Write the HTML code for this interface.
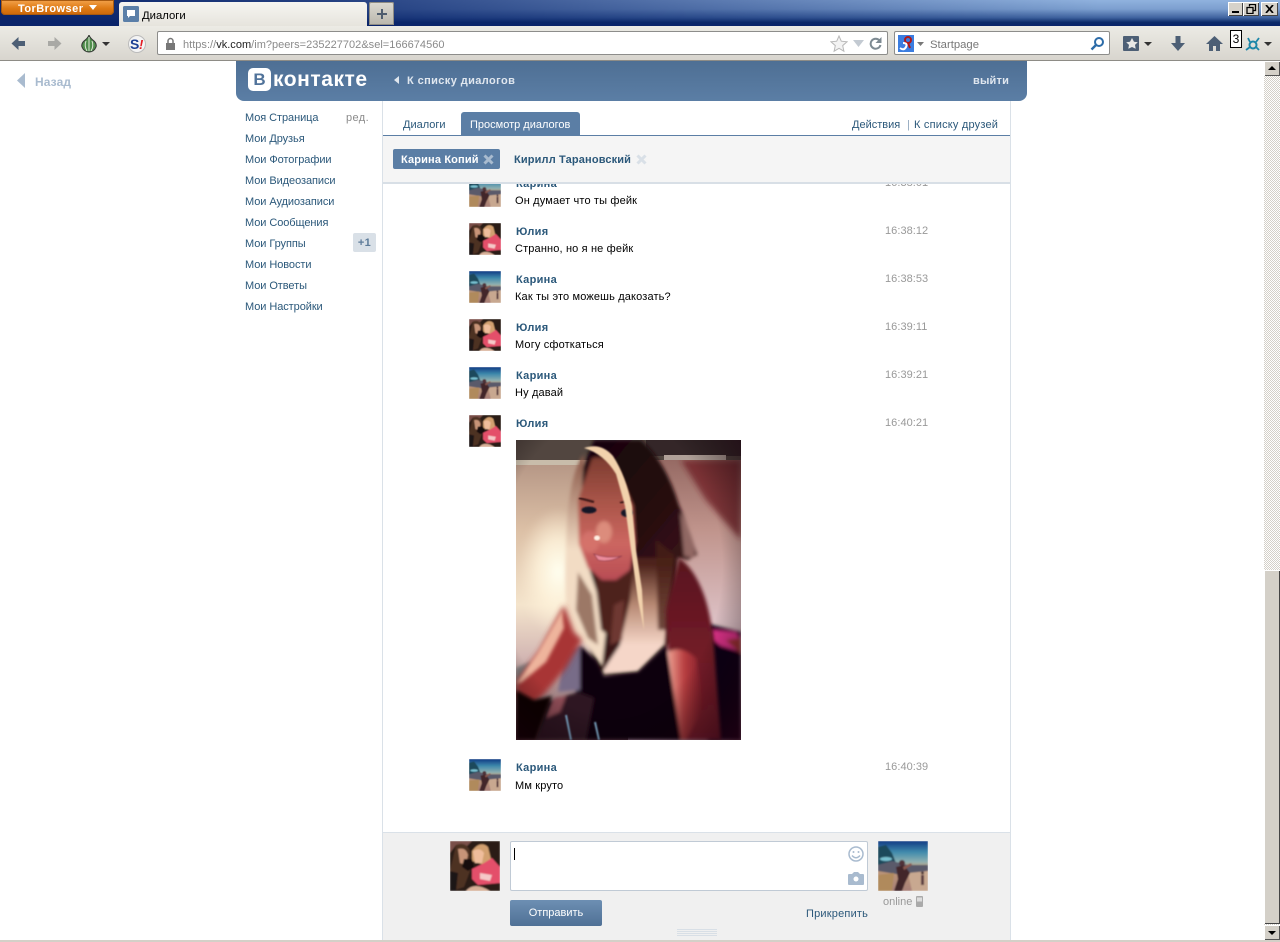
<!DOCTYPE html>
<html lang="ru"><head><meta charset="utf-8"><title>Диалоги</title>
<style>
html,body{margin:0;padding:0;width:1280px;height:942px;overflow:hidden;background:#fff}
body{position:relative;font:11px "Liberation Sans","DejaVu Sans",sans-serif;color:#000}
.a{position:absolute;white-space:nowrap}
.m{left:245px;color:#2b587a;line-height:14px;letter-spacing:-.07px}
.n{left:516px;font-weight:bold;color:#2b587a;line-height:14px;letter-spacing:.3px}
.t{left:515px;line-height:14px;letter-spacing:.15px}
.h{left:885px;color:#999;line-height:14px;letter-spacing:.05px}
svg.a{display:block}
</style></head><body>
<svg width="0" height="0" style="position:absolute">
<defs>
<filter id="b05"><feGaussianBlur stdDeviation=".7"/></filter>
<linearGradient id="ks" x1="0" y1="0" x2="0" y2="1"><stop offset="0" stop-color="#103a84"/><stop offset=".22" stop-color="#3f8aac"/><stop offset=".42" stop-color="#8fb0b0"/><stop offset=".52" stop-color="#c09a78"/><stop offset="1" stop-color="#a87f78"/></linearGradient>
<symbol id="kar" viewBox="0 0 50 50"><g filter="url(#b05)"><rect width="50" height="50" fill="url(#ks)"/>
<path d="M0 6L8 4L14 12L18 22L0 26Z" fill="#1c4a5c"/><path d="M0 24L14 20L30 24L50 24V30L24 34L0 30Z" fill="#5a5a6a"/><ellipse cx="8" cy="18" rx="6" ry="2" fill="#78c0d0"/>
<path d="M30 32L50 30V50H34Z" fill="#c8a890"/><path d="M0 34L16 32L14 50H0Z" fill="#b08a5c"/>
<circle cx="24" cy="22" r="3" fill="#503038"/><path d="M18 26L26 24L32 32L27 42L24 50H16L20 38Z" fill="#43262c"/><path d="M25 26l8 -4l1 2l-8 5z" fill="#8a5a50"/>
<path d="M43 34h3v10h-3z" fill="#5a3c40"/><circle cx="44.500" cy="32" r="1.500" fill="#4a3034"/></g></symbol>
<symbol id="jul" viewBox="0 0 50 50"><g filter="url(#b05)"><rect width="50" height="50" fill="#2a1a14"/><path d="M0 0H22L16 6L6 4L0 12Z" fill="#7a5048"/>
<path d="M6 4Q16 0 20 10L20 30L14 46L2 50L0 30Z" fill="#4e3024"/><path d="M8 8Q16 6 18 14L16 24L10 22Z" fill="#c89478"/>
<path d="M22 10Q30 -1 38 6L42 22L34 24L22 20Z" fill="#d2a070"/><path d="M23 10Q30 6 34 12L32 22L25 22Z" fill="#efbd9c"/>
<path d="M14 18h8l2 8l-6 4l-6 -4z" fill="#141010"/>
<path d="M22 28L34 22L42 17L50 26V42L28 44L22 38Z" fill="#e4506a"/><path d="M30 32l12 2l-2 6l-10 -2z" fill="#f5c8c8"/>
<path d="M16 50Q24 40 40 50Z" fill="#d8b098"/><path d="M0 30L8 32L6 50H0Z" fill="#1e1614"/></g></symbol>
<linearGradient id="wl" x1="0" y1="0" x2="0" y2="1"><stop offset="0" stop-color="#a8887a"/><stop offset=".3" stop-color="#dcc0a6"/><stop offset=".55" stop-color="#f4e4cc"/><stop offset=".72" stop-color="#d4b8b4"/><stop offset="1" stop-color="#6a4a50"/></linearGradient>
<linearGradient id="wr" x1="0" y1="0" x2="0" y2="1"><stop offset="0" stop-color="#8a5e58"/><stop offset=".3" stop-color="#c0948c"/><stop offset=".6" stop-color="#dcc0c4"/><stop offset="1" stop-color="#d8b8c8"/></linearGradient>
<linearGradient id="fc" x1="0" y1="0" x2="0" y2="1"><stop offset="0" stop-color="#7c3c30"/><stop offset=".35" stop-color="#a85448"/><stop offset=".7" stop-color="#cc6660"/><stop offset="1" stop-color="#b84c54"/></linearGradient>
<linearGradient id="dh" x1="0" y1="0" x2=".6" y2="1"><stop offset="0" stop-color="#140408"/><stop offset=".5" stop-color="#260a10"/><stop offset="1" stop-color="#4a1e1a"/></linearGradient>
<linearGradient id="lh" gradientUnits="userSpaceOnUse" x1="0" y1="125" x2="0" y2="205"><stop offset="0" stop-color="#4e241c"/><stop offset=".5" stop-color="#b88a74"/><stop offset="1" stop-color="#f5d6c8"/></linearGradient>
<linearGradient id="lp" gradientUnits="userSpaceOnUse" x1="0" y1="20" x2="0" y2="110"><stop offset="0" stop-color="#8c5a4a"/><stop offset="1" stop-color="#f2dcc4"/></linearGradient>
<linearGradient id="arm" x1="0" y1="0" x2="1" y2="0"><stop offset="0" stop-color="#eea090"/><stop offset=".45" stop-color="#b83e40"/><stop offset="1" stop-color="#7c1a28"/></linearGradient>
<linearGradient id="sh" x1="0" y1="0" x2="0" y2="1"><stop offset="0" stop-color="#58141e"/><stop offset="1" stop-color="#8a2230"/></linearGradient>
<radialGradient id="fl"><stop offset="0" stop-color="#fffff0"/><stop offset=".5" stop-color="#fff4dc" stop-opacity=".8"/><stop offset="1" stop-color="#fff0d8" stop-opacity="0"/></radialGradient>
<radialGradient id="vig" cx=".42" cy=".42" r=".8"><stop offset=".62" stop-color="#000" stop-opacity="0"/><stop offset="1" stop-color="#200010" stop-opacity=".75"/></radialGradient>
<filter id="b1"><feGaussianBlur stdDeviation="1.800"/></filter>
<filter id="b2"><feGaussianBlur stdDeviation="3"/></filter>
</defs></svg>

<!-- title bar -->
<div class="a" style="left:0;top:0;width:1280px;height:26px;background:linear-gradient(180deg,#90b2de 0,#7c9fcf 35%,#3f639f 68%,#0b2a68 86%,#0a246a 100%)"></div>
<div class="a" style="left:0;top:0;width:1100px;height:26px;background:linear-gradient(90deg,#0a246a 0,rgba(10,36,106,.8) 30%,rgba(10,36,106,.45) 60%,rgba(10,36,106,0))"></div>
<div class="a" style="left:1px;top:0;width:113px;height:15px;background:linear-gradient(180deg,#f3a34c,#de7a14 55%,#c9660a);border-radius:0 0 4px 4px;box-shadow:0 0 0 1px #a85a10 inset"></div>
<div class="a" style="left:18px;top:2px;color:#fff;font-weight:bold;line-height:14px;letter-spacing:.45px">TorBrowser</div>
<div class="a" style="left:89px;top:5px;width:0;height:0;border:4px solid transparent;border-top:5px solid #fff;border-bottom:0"></div>
<div class="a" style="left:119px;top:2px;width:248px;height:24px;background:linear-gradient(180deg,#f6f5f1,#e6e4dd);border-radius:3px 3px 0 0"></div>
<svg class="a" style="left:123px;top:6px" width="16" height="16"><rect width="16" height="16" rx="1.500" fill="#5b7fa8"/><path d="M4 4h8v6H7l-2 2v-2H4z" fill="#fff"/></svg>
<div class="a" style="left:142px;top:9px;line-height:14px;font-size:11.300px">Диалоги</div>
<div class="a" style="left:369px;top:2px;width:25px;height:23px;background:linear-gradient(180deg,#dcdad2,#b9b6ac);border-radius:2px 2px 0 0;box-shadow:0 0 0 1px #8e8c84 inset"></div>
<svg class="a" style="left:376px;top:8px" width="12" height="12"><path d="M6 1v10M1 6h10" stroke="#4f5d6e" stroke-width="2"/></svg>
<!-- window buttons -->
<div class="a" style="left:1228px;top:2px;width:15px;height:14px;background:#d6d2ca;box-shadow:inset 1px 1px #fff,inset -1px -1px #444"></div>
<div class="a" style="left:1243px;top:2px;width:16px;height:14px;background:#d6d2ca;box-shadow:inset 1px 1px #fff,inset -1px -1px #444"></div>
<div class="a" style="left:1261px;top:2px;width:17px;height:14px;background:#d6d2ca;box-shadow:inset 1px 1px #fff,inset -1px -1px #444"></div>
<div class="a" style="left:1232px;top:11px;width:7px;height:2px;background:#000"></div>
<svg class="a" style="left:1246px;top:4px" width="11" height="10"><path d="M3.500 2.500V.5h6v6H7.500M1 3.500h6v6H1z" fill="none" stroke="#000" stroke-width="1.300"/></svg>
<svg class="a" style="left:1265px;top:5px" width="9" height="8"><path d="M1 0l7 8M8 0L1 8" stroke="#000" stroke-width="1.700"/></svg>

<!-- toolbar -->
<div class="a" style="left:0;top:26px;width:1280px;height:34px;background:linear-gradient(180deg,#ecebe5,#d8d5ce);border-bottom:1px solid #8e8c86"></div>
<svg class="a" style="left:11px;top:36px" width="15" height="15"><path d="M7.500 1L.5 7.500L7.500 14V10H14V5H7.500Z" fill="#4d5f75"/></svg>
<svg class="a" style="left:47px;top:36px" width="15" height="15"><path d="M7.500 1L14.500 7.500L7.500 14V10H1V5H7.500Z" fill="#a9a9a5"/></svg>
<svg class="a" style="left:81px;top:35px" width="30" height="19"><path d="M8 0Q9 3 13 6Q16 9 15 12Q13 17 8 17Q3 17 1 12Q0 9 3 6Q7 3 8 0Z" fill="#4f8d4c" stroke="#333"/><path d="M8 2v14M5 6Q3 11 6 16M11 6Q13 11 10 16" stroke="#dfe8d8" fill="none"/><path d="M21 7h8l-4 4z" fill="#333"/></svg>
<svg class="a" style="left:128px;top:35px" width="18" height="18"><circle cx="9" cy="9" r="8.500" fill="#f4f4f4" stroke="#bbb"/><text x="2" y="14" font-family="Liberation Sans" font-weight="bold" font-size="14" fill="#1c3f94">S</text><text x="11" y="14" font-family="Liberation Sans" font-weight="bold" font-style="italic" font-size="13" fill="#e31b23">!</text></svg>
<div class="a" style="left:157px;top:31px;width:729px;height:22px;background:#fff;border:1px solid #8d8d8b;border-radius:2px"></div>
<svg class="a" style="left:165px;top:37px" width="11" height="13"><path d="M3 6V4a2.500 2.500 0 0 1 5 0v2" fill="none" stroke="#777" stroke-width="1.500"/><rect x="1" y="6" width="9" height="7" fill="#777"/></svg>
<div class="a" style="left:183px;top:38px;line-height:14px;color:#8a8a8a;font-size:11px;letter-spacing:.02px">https://<span style="color:#222">vk.com</span>/im?peers=235227702&amp;sel=166674560</div>
<svg class="a" style="left:830px;top:35px" width="18" height="18"><path d="M9 1l2.300 5.200 5.700.6-4.300 3.800 1.200 5.600L9 13.300 4.100 16.200l1.200-5.600L1 6.800l5.700-.6z" fill="#f3f3f3" stroke="#b8b8b8"/></svg>
<svg class="a" style="left:853px;top:39px" width="11" height="9"><path d="M0 1h11l-5.500 7z" fill="#c3cad2"/></svg>
<svg class="a" style="left:869px;top:36px" width="13" height="14"><path d="M10.500 4.500A5 5 0 1 0 11.500 9" fill="none" stroke="#7d8a92" stroke-width="2"/><path d="M12.500 1v6h-6z" fill="#7d8a92"/></svg>
<div class="a" style="left:894px;top:31px;width:214px;height:22px;background:#fff;border:1px solid #8d8d8b;border-radius:2px"></div>
<svg class="a" style="left:898px;top:35px" width="28" height="17"><rect width="16" height="17" fill="#3b7de0"/><circle cx="10" cy="5" r="3" fill="none" stroke="#b01818" stroke-width="2"/><path d="M10 8l2 5" stroke="#b01818" stroke-width="2"/><path d="M2 13q4 3 6-1t-3-4" fill="none" stroke="#fff" stroke-width="2"/><path d="M19 7h7l-3.500 4z" fill="#777"/></svg>
<div class="a" style="left:930px;top:38px;line-height:14px;color:#777;font-size:11.300px">Startpage</div>
<svg class="a" style="left:1090px;top:36px" width="15" height="15"><circle cx="9" cy="6" r="4" fill="none" stroke="#2d6ca8" stroke-width="2"/><path d="M6 9L1.500 13.500" stroke="#2d6ca8" stroke-width="2.400"/></svg>
<svg class="a" style="left:1123px;top:36px" width="30" height="15"><rect width="16" height="15" rx="1" fill="#4d5f75"/><path d="M9 2l2 3.800 3.800.5-2.800 2.600.7 3.800L9 11l-3.700 1.700.7-3.800-2.800-2.600 3.800-.5z" fill="#e8e8e6"/><path d="M21 6h8l-4 4z" fill="#333"/></svg>
<svg class="a" style="left:1171px;top:36px" width="14" height="15"><path d="M4.500 0h5v7H14L7 15 0 7h4.500z" fill="#4d5f75"/></svg>
<svg class="a" style="left:1206px;top:36px" width="17" height="15"><path d="M8.500 0L17 8h-3v7H10v-5H7v5H3V8H0z" fill="#4d5f75"/></svg>
<div class="a" style="left:1230px;top:30px;width:10px;height:16px;background:#fff;border:1px solid #000;text-align:center;line-height:16px;font-size:12px">3</div>
<svg class="a" style="left:1244px;top:36px" width="30" height="16"><circle cx="9" cy="9" r="3.500" fill="none" stroke="#1c86a8" stroke-width="2"/><path d="M2 14l4-3M12 6l3-4M12 11l3 3M6 6L4 2" stroke="#1c86a8" stroke-width="1.800"/><path d="M20 6h8l-4 4z" fill="#333"/></svg>

<!-- scrollbar -->
<div class="a" style="left:1264px;top:61px;width:16px;height:880px;background:repeating-conic-gradient(#d4d0c8 0 25%,#fff 0 50%) 0 0/2px 2px"></div>
<div class="a" style="left:1264px;top:61px;width:16px;height:15px;background:#d4d0c8;box-shadow:inset 1px 1px #fff,inset -1px -1px #555"></div>
<div class="a" style="left:1268px;top:66px;width:0;height:0;border:4px solid transparent;border-bottom:4px solid #000;border-top:0"></div>
<div class="a" style="left:1264px;top:570px;width:16px;height:354px;background:#d4d0c8;box-shadow:inset 1px 1px #fff,inset -1px -1px #444"></div>
<div class="a" style="left:1264px;top:925px;width:16px;height:15px;background:#d4d0c8;box-shadow:inset 1px 1px #fff,inset -1px -1px #555"></div>
<div class="a" style="left:1268px;top:931px;width:0;height:0;border:4px solid transparent;border-top:4px solid #000;border-bottom:0"></div>
<div class="a" style="left:0;top:940px;width:1280px;height:2px;background:#d4d0c8"></div>

<!-- back -->
<svg class="a" style="left:17px;top:73px" width="9" height="15"><path d="M8 0V15L0 7.500Z" fill="#a9bbcf"/></svg>
<div class="a" style="left:35px;top:75px;color:#a9bbcf;font-weight:bold;font-size:12px;line-height:14px;letter-spacing:.1px">Назад</div>

<!-- header -->
<div class="a" style="left:236px;top:61px;width:791px;height:40px;background:linear-gradient(180deg,#4e6f94,#5b7ea5);border-radius:0 0 8px 8px"></div>
<div class="a" style="left:248px;top:68px;width:23px;height:23px;background:#fff;border-radius:5px;color:#51739a;font:bold 17px/23px 'Liberation Sans',sans-serif;text-align:center">В</div>
<div class="a" style="left:273px;top:68px;color:#fff;font:bold 21px/23px 'Liberation Sans',sans-serif;letter-spacing:.55px">контакте</div>
<div class="a" style="left:394px;top:76px;width:0;height:0;border:4px solid transparent;border-right:5px solid #dfe6ee;border-left:0"></div>
<div class="a" style="left:407px;top:74px;color:#e0e7ef;font-weight:bold;line-height:14px;letter-spacing:.4px">К списку диалогов</div>
<div class="a" style="left:973px;top:74px;color:#e0e7ef;font-weight:bold;line-height:14px;letter-spacing:.2px">выйти</div>

<!-- left menu -->
<div class="a m" style="top:111px">Моя Страница</div>
<div class="a" style="left:346px;top:111px;color:#8a8a8a;line-height:14px;letter-spacing:.4px">ред.</div>
<div class="a m" style="top:132px">Мои Друзья</div>
<div class="a m" style="top:153px">Мои Фотографии</div>
<div class="a m" style="top:174px">Мои Видеозаписи</div>
<div class="a m" style="top:195px">Мои Аудиозаписи</div>
<div class="a m" style="top:216px">Мои Сообщения</div>
<div class="a m" style="top:237px">Мои Группы</div>
<div class="a" style="left:353px;top:233px;width:23px;height:19px;background:#d9e0e7;border-radius:2px;text-align:center;font-weight:bold;color:#5d7b99;line-height:21px;letter-spacing:.4px">+1</div>
<div class="a m" style="top:258px">Мои Новости</div>
<div class="a m" style="top:279px">Мои Ответы</div>
<div class="a m" style="top:300px">Мои Настройки</div>

<!-- main column -->
<div class="a" style="left:382px;top:101px;width:629px;height:839px;background:#fff;border-left:1px solid #dae1e8;border-right:1px solid #dae1e8;box-sizing:border-box"></div>
<div class="a" style="left:403px;top:118px;color:#2b587a;line-height:14px">Диалоги</div>
<div class="a" style="left:461px;top:112px;width:119px;height:24px;background:#5b7ea5;border-radius:3px 3px 0 0"></div>
<div class="a" style="left:470px;top:118px;color:#fff;line-height:14px">Просмотр диалогов</div>
<div class="a" style="left:852px;top:118px;color:#2b587a;line-height:14px">Действия</div>
<div class="a" style="left:907px;top:118px;color:#8fa6bd;line-height:14px">|</div>
<div class="a" style="left:914px;top:118px;color:#2b587a;line-height:14px;letter-spacing:.2px">К списку друзей</div>
<div class="a" style="left:383px;top:135px;width:627px;height:1px;background:#5b7ea5"></div>
<div class="a" style="left:383px;top:136px;width:627px;height:46px;background:#f5f5f5;border-bottom:2px solid #d8dfe6"></div>
<div class="a" style="left:393px;top:149px;width:107px;height:20px;background:#5b7ea5;border-radius:2px"></div>
<div class="a" style="left:401px;top:153px;color:#fff;font-weight:bold;line-height:14px;letter-spacing:.15px">Карина Копий</div>
<svg class="a" style="left:483px;top:154px" width="11" height="11"><path d="M1.500 1.500l8 8M9.500 1.500l-8 8" stroke="#a9bbcf" stroke-width="3"/></svg>
<div class="a" style="left:514px;top:153px;color:#2b587a;font-weight:bold;line-height:14px;letter-spacing:.15px">Кирилл Тарановский</div>
<svg class="a" style="left:636px;top:154px" width="11" height="11"><path d="M1.500 1.500l8 8M9.500 1.500l-8 8" stroke="#d9e0e7" stroke-width="3"/></svg>

<!-- messages: clipped first row -->
<div class="a" style="left:383px;top:184px;width:627px;height:30px;overflow:hidden">
<svg class="a" style="left:86px;top:-9px" width="32" height="32"><use href="#kar"/></svg>
<div class="a n" style="left:133px;top:-7px">Карина</div>
<div class="a h" style="left:502px;top:-8px">16:38:01</div>
<div class="a t" style="left:132px;top:10px">Он думает что ты фейк</div>
</div>

<svg class="a" style="left:469px;top:223px" width="32" height="32"><use href="#jul"/></svg>
<div class="a n" style="top:225px">Юлия</div><div class="a h" style="top:224px">16:38:12</div><div class="a t" style="top:242px">Странно, но я не фейк</div>

<svg class="a" style="left:469px;top:271px" width="32" height="32"><use href="#kar"/></svg>
<div class="a n" style="top:273px">Карина</div><div class="a h" style="top:272px">16:38:53</div><div class="a t" style="top:290px">Как ты это можешь дакозать?</div>

<svg class="a" style="left:469px;top:319px" width="32" height="32"><use href="#jul"/></svg>
<div class="a n" style="top:321px">Юлия</div><div class="a h" style="top:320px">16:39:11</div><div class="a t" style="top:338px">Могу сфоткаться</div>

<svg class="a" style="left:469px;top:367px" width="32" height="32"><use href="#kar"/></svg>
<div class="a n" style="top:369px">Карина</div><div class="a h" style="top:368px">16:39:21</div><div class="a t" style="top:386px">Ну давай</div>

<svg class="a" style="left:469px;top:415px" width="32" height="32"><use href="#jul"/></svg>
<div class="a n" style="top:417px">Юлия</div><div class="a h" style="top:416px">16:40:21</div>

<!-- photo -->
<svg class="a" style="left:516px;top:440px" width="225" height="300" viewBox="0 0 225 300">
<defs><clipPath id="pc"><rect width="225" height="300"/></clipPath></defs>
<g clip-path="url(#pc)">
<rect width="112" height="300" fill="url(#wl)"/>
<rect x="112" width="113" height="300" fill="url(#wr)"/>
<g filter="url(#b2)">
<path d="M165 20H225V100L190 60Z" fill="#701e28" opacity=".8"/>
<ellipse cx="42" cy="132" rx="40" ry="64" fill="url(#fl)"/>
</g>
<rect width="225" height="20" fill="#524640"/><rect x="130" width="95" height="16" fill="#342628"/>
<rect y="20" width="64" height="5" fill="#c8bcaa"/><rect x="148" y="15" width="62" height="5" fill="#b0a098"/>
<g filter="url(#b1)">
<!-- bed right -->
<path d="M192 184L225 192V300H192Z" fill="#0e0616"/>
<path d="M196 190L220 192L225 200V212L205 206L197 200Z" fill="#dc3088"/>
<path d="M210 200L225 198V214Z" fill="#a03034"/>
<!-- back hair -->
<path d="M78 0H125Q150 22 163 65Q176 95 181 115L172 120L162 118L158 200L120 240L80 235L60 150L62 40Z" fill="url(#dh)"/>
<path d="M164 72Q182 100 178 118L168 116Z" fill="#b88c84" opacity=".7"/>
<!-- left pale hair -->
<path d="M68 14Q56 30 52 70Q48 130 50 165L54 190L72 206L86 226L90 190L80 150L64 100L66 50Z" fill="url(#lp)"/>
<path d="M62 132L76 155L82 205L72 198L60 170Z" fill="#9c7866"/>
<!-- neck -->
<path d="M78 130L118 132L118 190L100 200L85 190Z" fill="#4e201e"/>
<!-- lower hair -->
<path d="M118 118L158 118L150 190L148 205L122 232L85 234L104 205L114 160Z" fill="url(#lh)"/>
<path d="M140 100L158 115L150 190L142 190Z" fill="#4a2018" opacity=".75"/>
<path d="M98 165L108 160L106 200L94 205Z" fill="#6e3830"/>
<!-- face -->
<path d="M76 18Q96 14 104 36L117 66L119 102L114 130L100 140L86 140L72 128L63 104L62 60Z" fill="url(#fc)"/>
<ellipse cx="74" cy="102" rx="9" ry="11" fill="#d87870" opacity=".7"/>
<ellipse cx="88" cy="92" rx="8" ry="11" fill="#dc8c7c"/>
</g>
<ellipse cx="81" cy="98" rx="3" ry="2.500" fill="#fff0e4" filter="url(#b05)"/>
<!-- features -->
<path d="M63 58L78 62M104 63L115 60" stroke="#3e1618" stroke-width="2.200" fill="none" filter="url(#b05)"/>
<ellipse cx="73" cy="70" rx="7.500" ry="3.500" fill="#141428" filter="url(#b05)"/>
<ellipse cx="111" cy="73" rx="6" ry="4" fill="#141428" filter="url(#b05)"/>
<path d="M78 114Q92 119 106 116Q92 123 82 120Z" fill="#ec8c9c" stroke="#984050" stroke-width=".8" filter="url(#b05)"/>
<g filter="url(#b05)">
<!-- blond stripe -->
<path d="M68 8Q85 2 97 16Q110 36 116 66L120 110L126 150L128 190L122 160L115 110L109 66L100 34Q88 14 68 8Z" fill="#f2d2ac"/>
</g>
<g filter="url(#b1)">
<!-- right arm -->
<path d="M163 118Q178 128 188 155Q195 175 198 205L205 300H165L152 210L150 170Z" fill="url(#sh)"/>
<path d="M152 212Q165 205 180 218L188 268L170 300H164Z" fill="url(#arm)"/>
<!-- black top -->
<path d="M64 205L80 220L88 236L122 232L150 205L165 300H55L60 250Z" fill="#0a0208"/>
<!-- fabric -->
<path d="M48 212L64 205L64 250L42 252Z" fill="#786c88"/>
<path d="M0 228L14 222L30 240L0 250Z" fill="#7c7a7c"/>
<path d="M30 262L62 252L78 258L70 300H20Z" fill="#2e1420"/>
<path d="M38 258L50 256L44 272L30 278Z" fill="#8c4c54"/>
</g>
<g filter="url(#b2)">
<!-- left arm -->
<path d="M48 165L58 192L66 200L50 228L30 252L14 268L0 256V242L24 210Z" fill="#a83634"/>
</g>
<g filter="url(#b1)">
<path d="M46 170L48 188L30 222L6 242L0 244L22 212Z" fill="#eeb49c"/>
<path d="M0 250L18 260L36 256L20 300H0Z" fill="#0a0206"/>
</g>
<path d="M50 275L55 300M79 282L83 300" stroke="#7ea8c8" stroke-width="2" filter="url(#b05)"/>
<rect width="225" height="300" fill="url(#vig)"/>
</g>
</svg>

<svg class="a" style="left:469px;top:759px" width="32" height="32"><use href="#kar"/></svg>
<div class="a n" style="top:761px">Карина</div><div class="a h" style="top:760px">16:40:39</div><div class="a t" style="top:779px">Мм круто</div>

<!-- composer -->
<div class="a" style="left:383px;top:832px;width:627px;height:108px;background:#f0f0f0;border-top:1px solid #dae1e8;box-sizing:border-box"></div>
<svg class="a" style="left:450px;top:841px" width="50" height="50"><use href="#jul"/></svg>
<div class="a" style="left:510px;top:841px;width:356px;height:48px;background:#fff;border:1px solid #c0cad5;border-radius:2px"></div>
<div class="a" style="left:514px;top:848px;width:1px;height:12px;background:#000"></div>
<svg class="a" style="left:848px;top:846px" width="16" height="16"><circle cx="8" cy="8" r="7" fill="none" stroke="#a9bbcf" stroke-width="1.500"/><circle cx="5.500" cy="6" r="1" fill="#a9bbcf"/><circle cx="10.500" cy="6" r="1" fill="#a9bbcf"/><path d="M4 9.500q4 4.500 8 0" fill="none" stroke="#a9bbcf" stroke-width="1.500"/></svg>
<svg class="a" style="left:848px;top:871px" width="16" height="14"><path d="M1 3h3l2-2h4l2 2h3a1 1 0 0 1 1 1v9a1 1 0 0 1-1 1H1a1 1 0 0 1-1-1V4a1 1 0 0 1 1-1z" fill="#a9bbcf"/><circle cx="8" cy="8" r="2.500" fill="#fff"/></svg>
<svg class="a" style="left:878px;top:841px" width="50" height="50"><use href="#kar"/></svg>
<div class="a" style="left:883px;top:895px;color:#999;line-height:14px">online</div>
<svg class="a" style="left:916px;top:896px" width="7" height="11"><rect width="7" height="11" rx="1" fill="#aaa"/><rect x="1" y="1.500" width="5" height="4" fill="#ddd"/></svg>
<div class="a" style="left:510px;top:900px;width:92px;height:26px;background:linear-gradient(180deg,#6d8fb3,#4f7095);border-radius:2px;color:#fff;text-align:center;line-height:27px">Отправить</div>
<div class="a" style="left:806px;top:907px;color:#2b587a;line-height:14px;letter-spacing:.2px">Прикрепить</div>
<div class="a" style="left:677px;top:929px;width:40px;height:1px;background:#d8dfe6;box-shadow:0 2px #d8dfe6,0 4px #d8dfe6,0 6px #d8dfe6"></div>
</body></html>
